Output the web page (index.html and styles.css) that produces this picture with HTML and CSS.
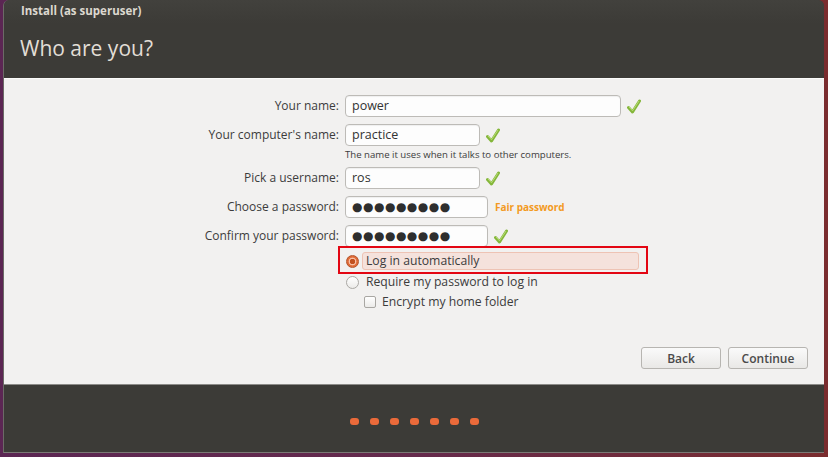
FILE: index.html
```html
<!DOCTYPE html>
<html>
<head>
<meta charset="utf-8">
<link rel="stylesheet" href="styles.css">
</head>
<body>
<div class="window">
  <header class="titlebar">
    <div class="wintitle">Install (as superuser)</div>
    <h1 class="heading">Who are you?</h1>
  </header>
  <main class="content">
    <div class="form">
      <label class="label">Your name:</label>
      <div class="field"><div class="input w-name">power</div><svg class="check" viewBox="0 0 14 15"><path d="M1.5 8.5 L5.5 13 L12.5 2" fill="none" stroke="#84b63a" stroke-width="3" stroke-linecap="round" stroke-linejoin="round"/><path d="M2.2 8.2 L5.5 11.8 L11.8 2.3" fill="none" stroke="#bde07a" stroke-width="0.9" stroke-linecap="round"/></svg></div>

      <label class="label">Your computer's name:</label>
      <div class="field"><div class="input w-short">practice</div><svg class="check" viewBox="0 0 14 15"><path d="M1.5 8.5 L5.5 13 L12.5 2" fill="none" stroke="#84b63a" stroke-width="3" stroke-linecap="round" stroke-linejoin="round"/><path d="M2.2 8.2 L5.5 11.8 L11.8 2.3" fill="none" stroke="#bde07a" stroke-width="0.9" stroke-linecap="round"/></svg></div>

      <div></div>
      <div class="hint">The name it uses when it talks to other computers.</div>

      <label class="label">Pick a username:</label>
      <div class="field"><div class="input w-short">ros</div><svg class="check" viewBox="0 0 14 15"><path d="M1.5 8.5 L5.5 13 L12.5 2" fill="none" stroke="#84b63a" stroke-width="3" stroke-linecap="round" stroke-linejoin="round"/><path d="M2.2 8.2 L5.5 11.8 L11.8 2.3" fill="none" stroke="#bde07a" stroke-width="0.9" stroke-linecap="round"/></svg></div>

      <label class="label">Choose a password:</label>
      <div class="field"><div class="input w-pass dots">●●●●●●●●●</div><span class="strength">Fair password</span></div>

      <label class="label">Confirm your password:</label>
      <div class="field"><div class="input w-pass dots">●●●●●●●●●</div><svg class="check" viewBox="0 0 14 15"><path d="M1.5 8.5 L5.5 13 L12.5 2" fill="none" stroke="#84b63a" stroke-width="3" stroke-linecap="round" stroke-linejoin="round"/><path d="M2.2 8.2 L5.5 11.8 L11.8 2.3" fill="none" stroke="#bde07a" stroke-width="0.9" stroke-linecap="round"/></svg></div>

      <div></div>
      <div class="options">
        <div class="marked">
          <div class="opt selected"><span class="radio on"></span><span class="optlabel hl">Log in automatically</span></div>
        </div>
        <div class="opt second"><span class="radio"></span><span class="optlabel">Require my password to log in</span></div>
        <div class="opt sub"><span class="checkbox"></span><span class="optlabel">Encrypt my home folder</span></div>
      </div>
    </div>
    <div class="buttons">
      <button class="btn">Back</button>
      <button class="btn">Continue</button>
    </div>
  </main>
  <footer class="progress">
    <span class="dot"></span><span class="dot"></span><span class="dot"></span><span class="dot"></span><span class="dot"></span><span class="dot"></span><span class="dot"></span>
  </footer>
</div>
</body>
</html>
```

FILE: styles.css
```css
html, body {
  margin: 0;
  padding: 0;
}
body {
  width: 828px;
  height: 457px;
  overflow: hidden;
  background: linear-gradient(90deg, #5b2653 0%, #652a4c 50%, #7a2c2e 100%);
  font-family: "Open Sans", "DejaVu Sans", sans-serif;
}
.window {
  margin-left: 3px;
  width: 821px;
  height: 453px;
  display: flex;
  flex-direction: column;
  background: #3c3b37;
  border-left: 1px solid #6b6a66;
  box-sizing: border-box;
  border-radius: 6px 6px 0 0;
  border-bottom: 1px solid #7a7975;
}
.titlebar {
  height: 78px;
  box-sizing: border-box;
  padding: 3px 0 0 17px;
  background: linear-gradient(#42413d, #3c3b37 30%);
  border-radius: 6px 6px 0 0;
  color: #dfdbd2;
}
.wintitle {
  font-size: 11.5px;
  font-weight: 700;
  line-height: 16px;
  color: #dcd8cf;
}
.heading {
  margin: 15px 0 0 -1px;
  font-size: 21px;
  font-weight: 400;
  line-height: 28px;
  color: #e2ded6;
}
.content {
  height: 307px;
  box-sizing: border-box;
  background: #f2f1f0;
  border-top: 1px solid #fbfbfa;
  border-bottom: 1px solid #8c8b88;
  display: flex;
  flex-direction: column;
  justify-content: space-between;
}
.form {
  display: grid;
  grid-template-columns: 341px 1fr;
  column-gap: 0;
  padding-top: 16px;
  font-size: 12px;
  color: #3c3c3c;
}
.label {
  text-align: right;
  padding-right: 6px;
  height: 22px;
  line-height: 22px;
  margin-bottom: 7px;
  white-space: nowrap;
  font-size: 12px;
}
.field {
  display: flex;
  align-items: center;
  height: 22px;
  margin-bottom: 7px;
}
.input {
  height: 22px;
  box-sizing: border-box;
  border: 1px solid #bdbbb7;
  border-radius: 4px;
  background: #fdfdfd;
  box-shadow: inset 0 1px 1px rgba(0,0,0,0.06);
  padding-left: 6px;
  line-height: 20px;
  font-size: 12.5px;
  color: #333;
}
.w-name { width: 276px; }
.w-short { width: 135px; }
.w-pass { width: 143px; }
.dots {
  font-family: "DejaVu Sans", sans-serif;
  font-size: 12px;
  letter-spacing: 0.5px;
  color: #2e2e2e;
}
.check {
  width: 14px;
  height: 15px;
  margin-left: 6px;
}
.strength {
  margin-left: 7px;
  font-size: 10px;
  font-weight: 700;
  color: #f39a22;
}
.hint {
  margin-top: -8px;
  height: 20px;
  line-height: 20px;
  font-size: 9.6px;
  color: #3c3c3c;
  margin-bottom: 2px;
}
.options {
  margin-top: -8px;
  display: flex;
  flex-direction: column;
}
.marked {
  margin-left: -7px;
  width: 310px;
  height: 28px;
  box-sizing: border-box;
  border: 2px solid #e30613;
  padding: 4px 7px 0 6px;
}
.opt {
  display: flex;
  align-items: center;
  height: 18px;
}
.optlabel {
  margin-left: 4px;
  font-size: 12.2px;
  line-height: 18px;
  color: #3c3c3c;
}
.hl {
  flex: 1;
  padding-left: 3px;
  margin-left: 3px;
  background: #f5e2dc;
  border: 1px solid #eec3b4;
  border-radius: 3px;
  height: 18px;
  box-sizing: border-box;
  line-height: 16px;
}
.radio {
  width: 13px;
  height: 13px;
  box-sizing: border-box;
  border-radius: 50%;
  border: 1px solid #aaa8a4;
  background: linear-gradient(#ffffff, #ecebe9);
  flex: none;
}
.radio.on {
  border-color: #b5532a;
  background: radial-gradient(circle, #c2511f 0, #c2511f 2.5px, #f6c3ab 3px, #f6b496 3.6px, #e2703c 4.2px, #d9622f 100%);
}
.second {
  margin-top: -1px;
  margin-left: 1px;
}
.second .optlabel {
  margin-left: 7px;
}
.sub {
  margin-top: 2px;
  margin-left: 19px;
}
.checkbox {
  width: 12px;
  height: 12px;
  box-sizing: border-box;
  border: 1px solid #a9a7a3;
  border-radius: 2px;
  background: linear-gradient(#ffffff, #ecebe9);
  flex: none;
}
.sub .optlabel {
  margin-left: 6px;
}
.buttons {
  display: flex;
  justify-content: flex-end;
  gap: 7px;
  padding: 0 16px 15px 0;
}
.btn {
  width: 80px;
  height: 22px;
  box-sizing: border-box;
  border: 1px solid #b7b5b1;
  border-radius: 3px;
  background: linear-gradient(#fafafa, #e9e8e6);
  font-family: "Open Sans", "DejaVu Sans", sans-serif;
  font-size: 12px;
  font-weight: 600;
  color: #4a4a4a;
  padding: 0;
}
.progress {
  flex: 1;
  display: flex;
  justify-content: center;
  align-items: center;
  gap: 11px;
  padding-top: 6px;
}
.dot {
  width: 9px;
  height: 7px;
  border-radius: 3px;
  background: #ea6a3a;
}
```
